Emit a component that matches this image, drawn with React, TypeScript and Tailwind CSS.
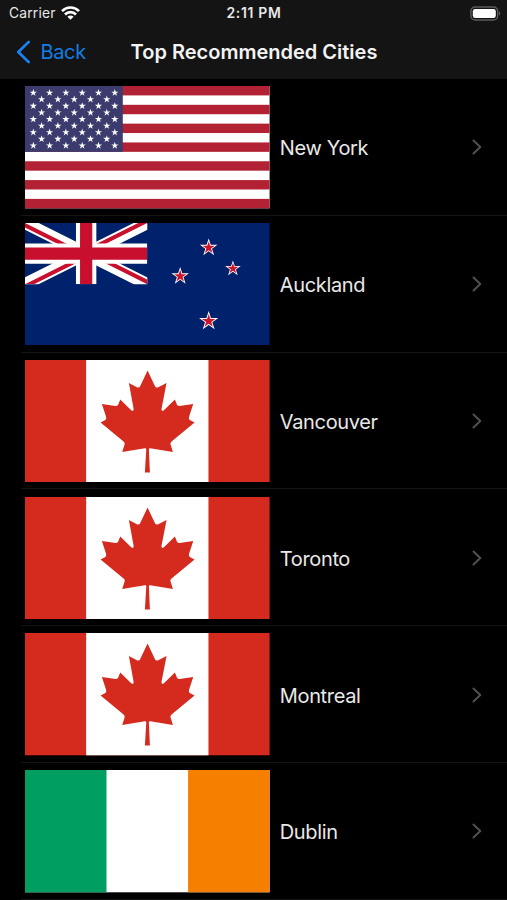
import type { ReactNode } from 'react';

function starPoints(cx: number, cy: number, r: number): string {
  return Array.from({ length: 10 }, (_, i) => {
    const radius = i % 2 === 0 ? r : r * 0.382;
    const angle = (Math.PI / 5) * i - Math.PI / 2;
    return `${(cx + radius * Math.cos(angle)).toFixed(2)},${(cy + radius * Math.sin(angle)).toFixed(2)}`;
  }).join(' ');
}

function Flag({ label, children }: { label: string; children: ReactNode }) {
  return (
    <svg
      role="img"
      aria-label={label}
      viewBox="0 0 244.6 122.3"
      className="h-[122.3px] w-[244.6px] shrink-0"
    >
      {children}
    </svg>
  );
}

function UnitedStatesFlag() {
  const stripe = 122.3 / 13;
  const rows = [0, 1, 2, 3, 4, 5, 6, 7, 8];
  return (
    <Flag label="United States">
      <rect width="244.6" height="122.3" fill="#fff" />
      {[0, 2, 4, 6, 8, 10, 12].map((i) => (
        <rect key={i} y={i * stripe} width="244.6" height={stripe} fill="#b22234" />
      ))}
      <rect width="97.8" height={stripe * 7} fill="#3c3b6e" />
      {rows.flatMap((row) =>
        Array.from({ length: row % 2 === 0 ? 6 : 5 }, (_, col) => (
          <polygon
            key={`${row}-${col}`}
            points={starPoints(8.3 * (row % 2 === 0 ? 1 : 2) + col * 16.3, 6.8 + row * 6.6, 3.8)}
            fill="#fff"
          />
        )),
      )}
    </Flag>
  );
}

function NewZealandFlag() {
  const stars = [
    [183.7, 24.7, 9.2],
    [155.2, 53.2, 9.2],
    [207.9, 45.6, 8.2],
    [183.7, 98.1, 10.1],
  ];
  return (
    <Flag label="New Zealand">
      <rect width="244.6" height="122.3" fill="#00216b" />
      <svg width="122.3" height="61.15" viewBox="0 0 60 30">
        <clipPath id="saltire">
          <path d="M30 15h30v15zv15H0zH0V0zV0h30z" />
        </clipPath>
        <path d="M0 0L60 30M60 0L0 30" stroke="#fff" strokeWidth="6" />
        <path d="M0 0L60 30M60 0L0 30" clipPath="url(#saltire)" stroke="#c8102e" strokeWidth="4" />
        <path d="M30 0V30M0 15H60" stroke="#fff" strokeWidth="10" />
        <path d="M30 0V30M0 15H60" stroke="#c8102e" strokeWidth="6" />
      </svg>
      {stars.map(([x, y, r]) => (
        <g key={`${x}-${y}`}>
          <polygon points={starPoints(x, y, r)} fill="#fff" />
          <polygon points={starPoints(x, y, r * 0.7)} fill="#cc142b" />
        </g>
      ))}
    </Flag>
  );
}

function CanadaFlag() {
  return (
    <Flag label="Canada">
      <rect width="244.6" height="122.3" fill="#d52b1e" />
      <rect x="61.15" width="122.3" height="122.3" fill="#fff" />
      <path
        transform="translate(54.9 -5.1) scale(0.33333)"
        fill="#d52b1e"
        d="M203 47L181 93Q178 100 171 97L147 84L161 161Q162 172 154 166L121 134L115 149Q113 154 107 153L66 147L78 184Q81 193 75 196L62 203L131 260Q136 264 134 269L127 291L195 280Q200 279 199 285L195 353H210L207 285Q206 279 211 280L279 291L272 269Q270 264 275 260L344 203L331 196Q325 193 328 184L340 147L299 153Q293 154 291 149L285 134L252 166Q244 172 245 161L260 84L235 97Q228 100 225 93Z"
      />
    </Flag>
  );
}

function IrelandFlag() {
  return (
    <Flag label="Ireland">
      <rect width="244.6" height="122.3" fill="#fff" />
      <rect width="81.5" height="122.3" fill="#009e60" />
      <rect x="163.1" width="81.5" height="122.3" fill="#f77f00" />
    </Flag>
  );
}

const cities = [
  { name: 'New York', flag: <UnitedStatesFlag /> },
  { name: 'Auckland', flag: <NewZealandFlag /> },
  { name: 'Vancouver', flag: <CanadaFlag /> },
  { name: 'Toronto', flag: <CanadaFlag /> },
  { name: 'Montreal', flag: <CanadaFlag /> },
  { name: 'Dublin', flag: <IrelandFlag /> },
];

function StatusBar() {
  return (
    <div className="grid h-[27px] grid-cols-[1fr_auto_1fr] items-center pl-[9px] pr-[6px] text-[13.8px] leading-none text-[#e8e8e8]">
      <div className="flex items-center gap-[5.5px]">
        <span className="pt-px tracking-[0.2px]">Carrier</span>
        <svg viewBox="0 0 19 14" className="h-[14px] w-[19px]" fill="none" stroke="#fff" strokeWidth="2.7">
          <path d="M1 5.1Q4.7 1.5 9.5 1.5T18 5.1" />
          <path d="M4 8.5Q6.3 6.1 9.5 6.1T15 8.5" />
          <path d="M9.5 13.7L6.4 10.7Q9.5 8.2 12.6 10.7Z" fill="#fff" stroke="none" />
        </svg>
      </div>
      <span className="mr-[2px] pt-px text-center text-[13.9px] font-semibold tracking-[0.7px]">2:11 PM</span>
      <svg viewBox="0 0 31 15" className="h-[15px] w-[31px] justify-self-end">
        <rect x="0.9" y="1" width="26.8" height="13" rx="4.2" fill="none" stroke="#5c5c5c" strokeWidth="1.4" />
        <rect x="2.8" y="2.9" width="23" height="9.2" rx="2.4" fill="#fff" />
        <path d="M29.2 5.3Q31.2 7.5 29.2 9.7Z" fill="#6a6a6a" />
      </svg>
    </div>
  );
}

export default function App() {
  return (
    <div className="flex h-screen w-full flex-col overflow-hidden bg-black font-['Inter',sans-serif]">
      <header className="h-[79px] shrink-0 bg-[#141414]">
        <StatusBar />
        <nav className="grid h-[50px] grid-cols-[1fr_auto_1fr] items-center">
          <button className="flex items-center gap-[9.5px] pl-[16px] text-[20px] tracking-[-0.35px] text-[#147ce5]">
            <svg viewBox="0 0 15 24" className="h-[24px] w-[15px]" fill="none" stroke="#1684f2" strokeWidth="2.7" strokeLinecap="round" strokeLinejoin="round">
              <path d="M12.7 1.9L2.3 12L12.7 22.1" />
            </svg>
            <span>Back</span>
          </button>
          <h1 className="pl-px text-[20px] font-semibold text-[#f3f3f3]">Top Recommended Cities</h1>
        </nav>
      </header>
      <ul className="shrink-0">
        {cities.map((city) => (
          <li key={city.name} className="ml-[21px] flex h-[136.8px] items-center border-b border-[#141414] pl-[4.2px] pr-[25px] pt-[1.05px]">
            {city.flag}
            <span className="ml-[10px] grow pt-[2px] text-[20px] tracking-[-0.35px] text-[#e9e9e9]">{city.name}</span>
            <svg viewBox="0 0 10 16" className="h-[16px] w-[10px]" fill="none" stroke="#505052" strokeWidth="2" strokeLinecap="round" strokeLinejoin="round">
              <path d="M1.5 1.5L8.3 8L1.5 14.5" />
            </svg>
          </li>
        ))}
      </ul>
    </div>
  );
}
